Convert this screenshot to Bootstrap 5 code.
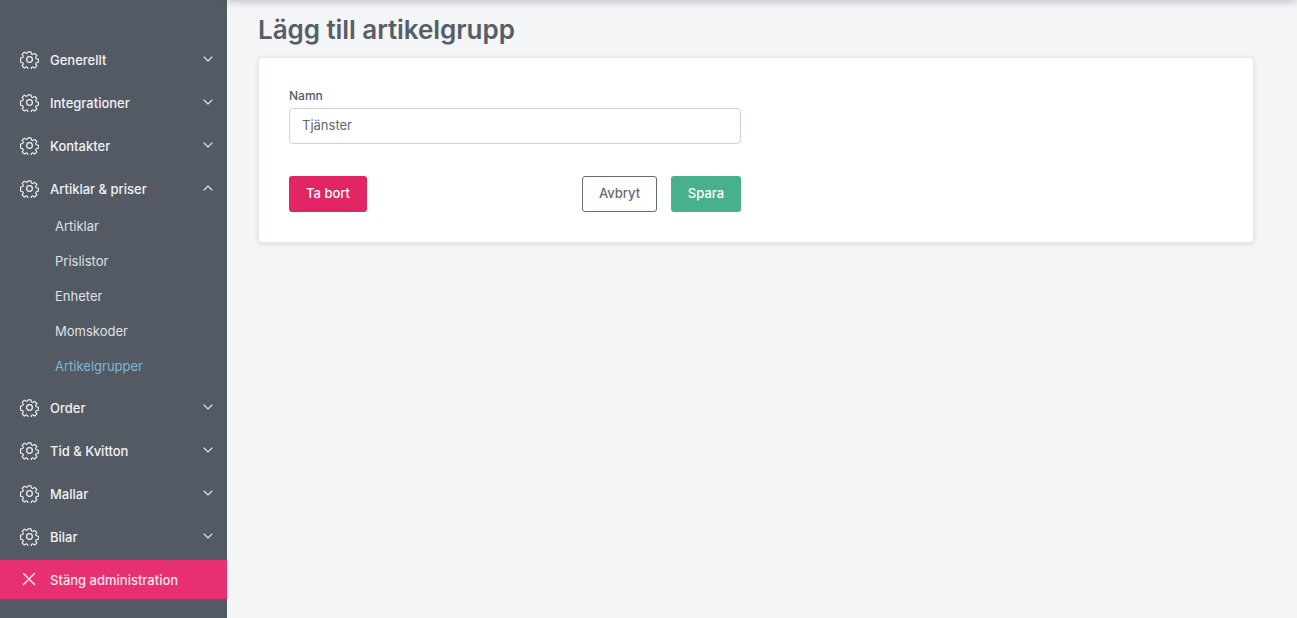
<!DOCTYPE html>
<html lang="sv">
<head>
<meta charset="utf-8">
<title>Lägg till artikelgrupp</title>
<link href="https://cdn.jsdelivr.net/npm/bootstrap@5.3.0/dist/css/bootstrap.min.css" rel="stylesheet">
<style>
html,body{height:100%;overflow:hidden}
body{font-family:Inter,"Liberation Sans",sans-serif;background:#f4f5f7;color:#535b65}
.shell{height:618px}
.side{width:227px;background:#535a64;padding-top:38px;flex:none}
.side-item{height:43px;padding:0 14px 0 20px;color:#f1f2f4;font-size:13px;font-weight:500;text-decoration:none}
.side-item svg.gear{width:19px;height:19px;margin-right:11px;flex:none}
.side-item svg.chev{width:10px;height:6px;margin-top:-2px;margin-left:auto}
.lab{padding-top:2px}
.side-sub{height:35px;padding:2px 0 0 55px;color:#dfe2e5;font-size:13px;text-decoration:none;display:flex;align-items:center}
.side-sub.on{color:#7fb8d8}
.subs{margin-top:-1.5px;margin-bottom:2.5px}
.side-close{height:39px;margin-top:1.5px;background:#e63071;color:#fbe3ec;font-size:13px;font-weight:500;padding-left:22px;text-decoration:none}
.side-close .lab{padding-top:4px}
.side-close svg{width:14px;height:14px;margin-right:14px}
.main-area{position:relative;min-width:0;padding:0 43px 0 31px}
.main-area::before{content:"";position:absolute;left:0;right:0;top:-6px;height:6px;box-shadow:0 0 10px rgba(60,60,70,.45)}
.page-title{font-size:26px;font-weight:600;color:#575e68;letter-spacing:-.05px;margin:13px 0 10px 0;line-height:34px}
.panel{background:#fff;border:1px solid #e6e7eb;border-radius:4px;box-shadow:0 1px 5px rgba(60,60,70,.13);padding:30px;height:186px}
.form-w{width:452px}
.lbl{font-size:12px;font-weight:500;margin-bottom:4px;line-height:16px;display:block;color:#535b65}
.inp{height:36px;border:1px solid #cdd0d8;border-radius:4px;font-size:13px;color:#616871;padding:0 12px 2px}
.act{height:36px;font-size:13px;font-weight:500;border-radius:3px;padding:0;display:flex;align-items:center;justify-content:center}
.act-del{width:78px;background:#e22565;color:#fff;border:0}
.act-cancel{width:75px;background:#fff;color:#646b75;border:1px solid #646b75;margin-right:14px}
.act-save{width:70px;background:#49b08c;color:#fff;border:0}
.act-row{margin-top:32px}
</style>
</head>
<body>
<svg width="0" height="0" class="position-absolute">
<symbol id="gear" viewBox="0 0 24 24"><g fill="none" stroke="#eef0f2" stroke-width="1.6" stroke-linejoin="round" stroke-linecap="round"><circle cx="12" cy="12" r="3.6"/><path d="M9.9 1.2h4.2l.7 3.1 1.7.8 2.8-1.7 3 3-1.7 2.8.8 1.7 3.1.7v4.2l-3.1.7-.8 1.7 1.7 2.8-3 3-2.8-1.7-1.7.8-.7 3.1H9.9l-.7-3.1-1.7-.8-2.8 1.7-3-3 1.7-2.8-.8-1.7-3.1-.7V9.9l3.1-.7.8-1.7-1.7-2.8 3-3 2.8 1.7 1.7-.8z" transform="translate(12 12) scale(.9) translate(-12 -12)"/></g></symbol>
<symbol id="cd" viewBox="0 0 10 6"><path d="M1 1l4 4 4-4" fill="none" stroke="#e4e6e9" stroke-width="1.1" stroke-linecap="round"/></symbol>
<symbol id="cu" viewBox="0 0 10 6"><path d="M1 5l4-4 4 4" fill="none" stroke="#e4e6e9" stroke-width="1.1" stroke-linecap="round"/></symbol>
</svg>
<div class="d-flex shell">
<nav class="side d-flex flex-column">
<a href="#" class="side-item d-flex align-items-center"><svg class="gear"><use href="#gear"/></svg><span class="lab">Generellt</span><svg class="chev"><use href="#cd"/></svg></a>
<a href="#" class="side-item d-flex align-items-center"><svg class="gear"><use href="#gear"/></svg><span class="lab">Integrationer</span><svg class="chev"><use href="#cd"/></svg></a>
<a href="#" class="side-item d-flex align-items-center"><svg class="gear"><use href="#gear"/></svg><span class="lab">Kontakter</span><svg class="chev"><use href="#cd"/></svg></a>
<a href="#" class="side-item d-flex align-items-center"><svg class="gear"><use href="#gear"/></svg><span class="lab">Artiklar &amp; priser</span><svg class="chev"><use href="#cu"/></svg></a>
<div class="subs">
<a href="#" class="side-sub">Artiklar</a>
<a href="#" class="side-sub">Prislistor</a>
<a href="#" class="side-sub">Enheter</a>
<a href="#" class="side-sub">Momskoder</a>
<a href="#" class="side-sub on">Artikelgrupper</a>
</div>
<a href="#" class="side-item d-flex align-items-center"><svg class="gear"><use href="#gear"/></svg><span class="lab">Order</span><svg class="chev"><use href="#cd"/></svg></a>
<a href="#" class="side-item d-flex align-items-center"><svg class="gear"><use href="#gear"/></svg><span class="lab">Tid &amp; Kvitton</span><svg class="chev"><use href="#cd"/></svg></a>
<a href="#" class="side-item d-flex align-items-center"><svg class="gear"><use href="#gear"/></svg><span class="lab">Mallar</span><svg class="chev"><use href="#cd"/></svg></a>
<a href="#" class="side-item d-flex align-items-center"><svg class="gear"><use href="#gear"/></svg><span class="lab">Bilar</span><svg class="chev"><use href="#cd"/></svg></a>
<a href="#" class="side-close d-flex align-items-center"><svg viewBox="0 0 14 14"><path d="M1.5 1.5l11 11M12.5 1.5l-11 11" stroke="#fbe3ec" stroke-width="1.5" fill="none" stroke-linecap="round"/></svg><span class="lab">Stäng administration</span></a>
</nav>
<main class="main-area flex-grow-1">
<h1 class="page-title">Lägg till artikelgrupp</h1>
<div class="panel">
<form class="form-w">
<label class="lbl" for="namn">Namn</label>
<input id="namn" class="form-control inp" value="Tjänster">
<div class="d-flex act-row align-items-center">
<button type="button" class="btn act act-del">Ta bort</button>
<button type="button" class="btn act act-cancel ms-auto">Avbryt</button>
<button type="button" class="btn act act-save">Spara</button>
</div>
</form>
</div>
</main>
</div>
<script src="https://cdn.jsdelivr.net/npm/bootstrap@5.3.0/dist/js/bootstrap.bundle.min.js"></script>
</body>
</html>
